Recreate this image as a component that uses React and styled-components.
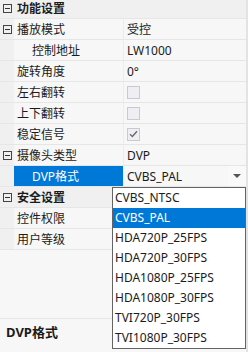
import React from "react";
import styled, { createGlobalStyle } from "styled-components";

const GlobalStyle = createGlobalStyle`
  html, body {
    margin: 0;
    padding: 0;
    background: #f7f7f7;
  }
  * {
    box-sizing: border-box;
  }
`;

const Frame = styled.div`
  position: relative;
  width: 248px;
  height: 352px;
  overflow: hidden;
  background: #f7f7f7;
  border-right: 2px solid #e3e3e3;
  font-family: "Noto Sans", "Noto Sans CJK SC", sans-serif;
  font-size: 12px;
  color: #1b1b1b;
`;

const Grid = styled.div`
  display: flex;
  flex-direction: column;
  margin-top: -2px;
`;

const Row = styled.div`
  display: grid;
  grid-template-columns: 14px 110px 1fr;
  height: 21px;
  border-bottom: 1px solid #e6e6e6;
  background: ${({ header }) => (header ? "#f0f0f0" : "#f7f7f7")};
`;

const Gutter = styled.div`
  display: flex;
  align-items: center;
  justify-content: center;
  background: #f0f0f0;
`;

const ToggleBox = styled.span`
  position: relative;
  width: 9px;
  height: 9px;
  border: 1px solid #444;
  margin-left: 1px;
  &::after {
    content: "";
    position: absolute;
    left: 1px;
    right: 1px;
    top: 3px;
    height: 1px;
    background: #333;
  }
`;

const Name = styled.div`
  display: flex;
  align-items: center;
  padding-left: ${({ indent }) => (indent ? "18px" : "3px")};
  white-space: nowrap;
  grid-column: ${({ wide }) => (wide ? "span 2" : "auto")};
  font-weight: ${({ wide }) => (wide ? 700 : 400)};
  background: ${({ selected }) => (selected ? "#0078d7" : "transparent")};
  color: ${({ selected }) => (selected ? "#fff" : "inherit")};
  border-right: ${({ wide }) => (wide ? "none" : "1px solid #ececec")};
`;

const Value = styled.div`
  display: flex;
  align-items: center;
  padding-left: 3px;
  white-space: nowrap;
`;

const Check = styled.span`
  display: flex;
  align-items: center;
  justify-content: center;
  width: 13px;
  height: 13px;
  border: 1px solid #c9c9d3;
  background: #efeff3;
`;

const Combo = styled.div`
  flex: 1;
  display: flex;
  align-items: center;
  justify-content: space-between;
  height: 100%;
`;

const Arrow = styled.span`
  display: flex;
  align-items: center;
  justify-content: center;
  width: 18px;
  height: 100%;
  background: #f9f9f9;
  &::after {
    content: "";
    border-left: 4px solid transparent;
    border-right: 4px solid transparent;
    border-top: 4px solid #555;
  }
`;

const Description = styled.div`
  position: absolute;
  left: 0;
  right: 0;
  top: 318px;
  bottom: 0;
  border-top: 1px solid #e6e6e6;
  padding: 3px 6px;
  font-weight: 700;
  font-size: 13px;
  line-height: 20px;
`;

const Dropdown = styled.ul`
  position: absolute;
  left: 112px;
  top: 187px;
  width: 134px;
  margin: 0;
  padding: 0;
  list-style: none;
  background: #fff;
  border: 1px solid #646464;
`;

const Option = styled.li`
  height: 20px;
  line-height: 20px;
  padding-left: 2px;
  white-space: nowrap;
  background: ${({ active }) => (active ? "#0078d7" : "#fff")};
  color: ${({ active }) => (active ? "#fff" : "#1b1b1b")};
`;

const rows = [
  { header: true, name: "功能设置" },
  { toggle: true, name: "播放模式", value: "受控" },
  { indent: true, name: "控制地址", value: "LW1000" },
  { name: "旋转角度", value: "0°" },
  { name: "左右翻转", check: "off" },
  { name: "上下翻转", check: "off" },
  { name: "稳定信号", check: "on" },
  { toggle: true, name: "摄像头类型", value: "DVP" },
  { indent: true, selected: true, name: "DVP格式", combo: "CVBS_PAL" },
  { header: true, name: "安全设置" },
  { name: "控件权限" },
  { name: "用户等级" },
];

const options = [
  "CVBS_NTSC",
  "CVBS_PAL",
  "HDA720P_25FPS",
  "HDA720P_30FPS",
  "HDA1080P_25FPS",
  "HDA1080P_30FPS",
  "TVI720P_30FPS",
  "TVI1080P_30FPS",
];

function CheckMark() {
  return (
    <svg width="9" height="8" viewBox="0 0 9 8">
      <path d="M1 4.2 L3.4 6.5 L8 1.2" fill="none" stroke="#6b6b6b" strokeWidth="1.4" />
    </svg>
  );
}

export default function App() {
  return (
    <>
      <GlobalStyle />
      <Frame>
        <Grid>
          {rows.map((r, i) => (
            <Row key={i} header={r.header}>
              <Gutter>{(r.header || r.toggle) && <ToggleBox />}</Gutter>
              {r.header ? (
                <Name wide>{r.name}</Name>
              ) : (
                <>
                  <Name indent={r.indent} selected={r.selected}>
                    {r.name}
                  </Name>
                  <Value>
                    {r.value}
                    {r.check && <Check>{r.check === "on" && <CheckMark />}</Check>}
                    {r.combo && (
                      <Combo>
                        <span>{r.combo}</span>
                        <Arrow />
                      </Combo>
                    )}
                  </Value>
                </>
              )}
            </Row>
          ))}
        </Grid>
        <Description>DVP格式</Description>
        <Dropdown>
          {options.map((o) => (
            <Option key={o} active={o === "CVBS_PAL"}>
              {o}
            </Option>
          ))}
        </Dropdown>
      </Frame>
    </>
  );
}
